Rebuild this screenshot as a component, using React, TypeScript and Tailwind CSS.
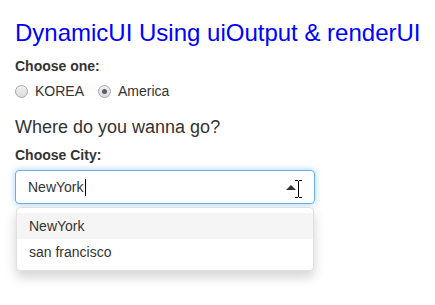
export default function App() {
  return (
    <div className="min-h-[305px] bg-white px-[15px] font-['Liberation_Sans',Arial,sans-serif] text-[14px] leading-[20px] text-[#333]">
      {/* title */}
      <h2 className="whitespace-nowrap pt-[19px] text-[24px] leading-[28px] text-[#0000ff]">DynamicUI Using uiOutput &amp; renderUI</h2>

      {/* radio group */}
      <div className="mt-[9px]">
        <div className="font-bold">Choose one:</div>
        <div className="mt-[5px] flex items-center">
          <label className="flex items-center">
            <span className="h-[13px] w-[13px] rounded-full border border-[#a9a9a9] bg-gradient-to-b from-[#f0f0f0] to-[#dcdcdc]" />
            <span className="ml-[7px]">KOREA</span>
          </label>
          <label className="ml-[14px] flex items-center">
            <span className="flex h-[13px] w-[13px] items-center justify-center rounded-full border border-[#a9a9a9] bg-gradient-to-b from-[#f0f0f0] to-[#dcdcdc]">
              <span className="h-[5px] w-[5px] rounded-full bg-[#5a5a6a]" />
            </span>
            <span className="ml-[7px]">America</span>
          </label>
        </div>
      </div>

      {/* dynamic output */}
      <div className="mt-[14px] text-[18px] leading-[24px]">Where do you wanna go?</div>
      <div className="mt-[6px] font-bold">Choose City:</div>

      <div className="relative mt-[5px] w-[300px]">
        <div className="flex h-[34px] items-center rounded-[4px] border border-[#66afe9] px-[12px] shadow-[0_0_6px_rgba(102,175,233,0.6)]">
          <span>NewYork</span>
          <span className="ml-px h-[17px] w-px bg-black" />
          <span className="ml-auto mr-[6px] h-0 w-0 border-x-[5px] border-b-[5px] border-x-transparent border-b-[#333]" />
        </div>
        {/* mouse I-beam cursor */}
        <svg className="absolute left-[280px] top-[10px]" width="7" height="18" viewBox="0 0 7 18">
          <path d="M0 0.5h3M4 0.5h3M3.5 1v16M0 17.5h3M4 17.5h3" stroke="#000" strokeWidth="1" fill="none" />
        </svg>

        {/* dropdown */}
        <div className="absolute left-px right-px top-[37px] rounded-[4px] border border-[#e0e0e0] bg-white py-[5px] shadow-[0_6px_12px_rgba(0,0,0,0.175)]">
          <div className="bg-[#f5f5f5] px-[12px] py-[3px]">NewYork</div>
          <div className="px-[12px] py-[3px]">san francisco</div>
        </div>
      </div>
    </div>
  );
}
